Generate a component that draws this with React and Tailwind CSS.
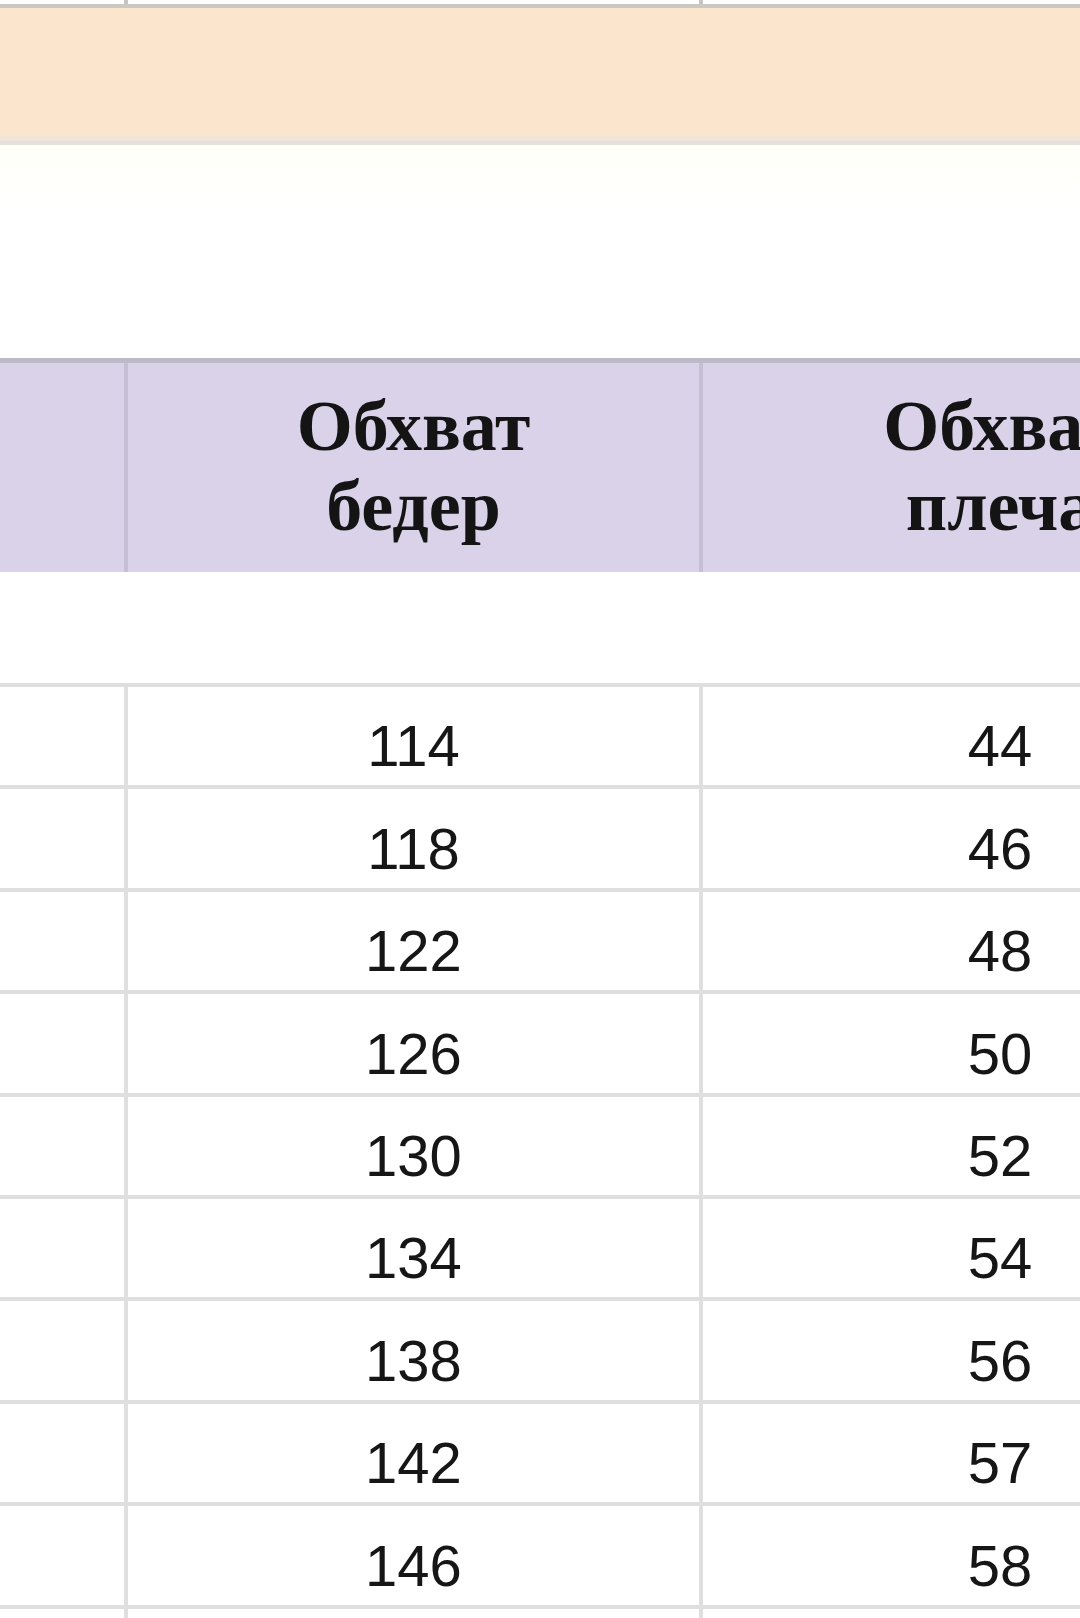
import React from 'react';

const rows = [
  ['114', '44'],
  ['118', '46'],
  ['122', '48'],
  ['126', '50'],
  ['130', '52'],
  ['134', '54'],
  ['138', '56'],
  ['142', '57'],
  ['146', '58'],
];

const serif = { fontFamily: '"Liberation Serif", "Times New Roman", serif' };
const sans = { fontFamily: '"Liberation Sans", Arial, sans-serif' };

const HeaderCell = ({ lines }) => (
  <div className="flex flex-col items-center justify-center text-[72px] leading-[80px] font-bold text-[#141414] whitespace-nowrap" style={serif}>
    {lines.map((l) => (
      <span key={l}>{l}</span>
    ))}
  </div>
);

const App = () => {
  return (
    <div className="w-[1080px] h-[1618px] overflow-hidden bg-white flex flex-col">
      {/* top strip of the previous table */}
      <div className="flex h-[4px] shrink-0 bg-white">
        <div className="w-[128px] shrink-0 border-r-4 border-[#c4c4c0]" />
        <div className="w-[575px] shrink-0 border-r-4 border-[#c4c4c0]" />
        <div className="flex-1" />
      </div>
      <div className="h-[4px] shrink-0 bg-[#c9c8c1]" />
      <div className="h-[128px] shrink-0 bg-[#fce5cd]" />
      <div className="h-[5px] shrink-0 bg-[#f1e4d8]" />
      <div className="h-[4px] shrink-0 bg-[#e4e0da]" />

      <div className="h-[213px] shrink-0 bg-gradient-to-b from-[#fffff8] to-white to-[30%]" />

      {/* header */}
      <div className="h-[5px] shrink-0 bg-[#bdb9c8]" />
      <div className="flex h-[209px] shrink-0 bg-[#d9d2e9]">
        <div className="w-[128px] shrink-0 border-r-4 border-[#c6bfd4]" />
        <div className="w-[575px] shrink-0 border-r-4 border-[#c6bfd4] flex items-center justify-center pb-[4px]">
          <HeaderCell lines={['Обхват', 'бедер']} />
        </div>
        <div className="w-[594px] shrink-0 flex items-center justify-center pb-[4px]">
          <HeaderCell lines={['Обхват', 'плеча']} />
        </div>
      </div>

      <div className="h-[111px] shrink-0 bg-white" />

      {/* body rows */}
      <div className="flex flex-col bg-white">
        {rows.map(([hip, shoulder]) => (
          <div key={hip} className="flex h-[102.4px] shrink-0 border-t-4 border-[#dfdfdf]">
            <div className="w-[128px] shrink-0 border-r-4 border-[#dfdfdf]" />
            <div className="w-[575px] shrink-0 border-r-4 border-[#dfdfdf] flex items-end justify-center pb-[10px]">
              <span className="text-[58px] leading-[58px] text-[#161616]" style={sans}>{hip}</span>
            </div>
            <div className="w-[594px] shrink-0 flex items-end justify-center pb-[10px]">
              <span className="text-[58px] leading-[58px] text-[#161616]" style={sans}>{shoulder}</span>
            </div>
          </div>
        ))}
        <div className="flex h-[40px] shrink-0 border-t-4 border-[#dfdfdf]">
          <div className="w-[128px] shrink-0 border-r-4 border-[#dfdfdf]" />
          <div className="w-[575px] shrink-0 border-r-4 border-[#dfdfdf]" />
          <div className="flex-1" />
        </div>
      </div>
    </div>
  );
};

export default App;
